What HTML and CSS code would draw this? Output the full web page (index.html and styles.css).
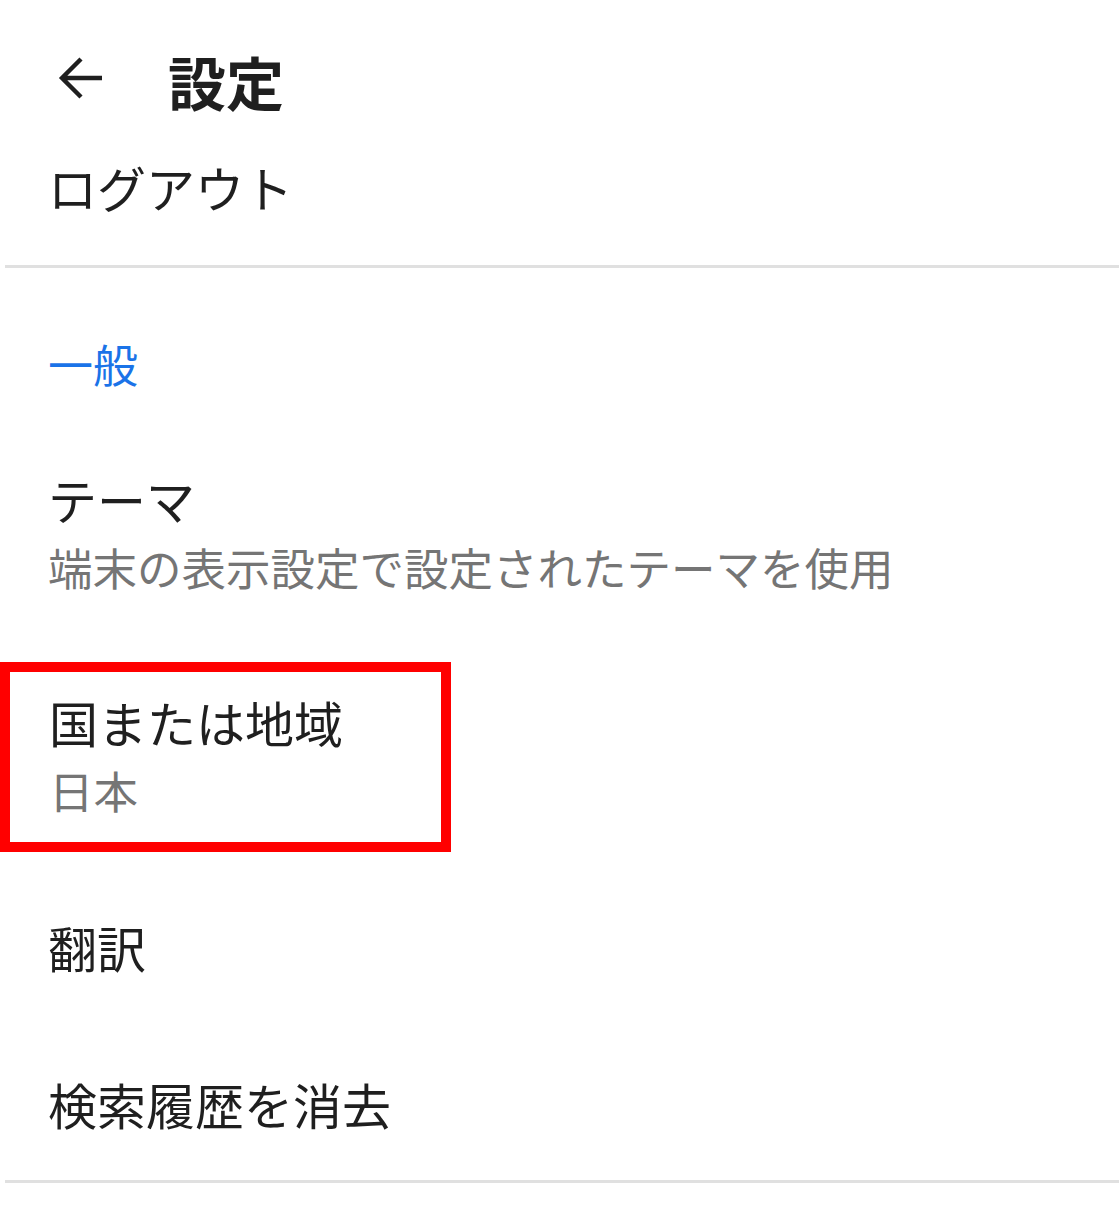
FILE: index.html
```html
<!DOCTYPE html>
<html lang="ja">

<head>
  <meta charset="UTF-8">
  <title>設定</title>
  <link rel="stylesheet" href="styles.css">
</head>

<body>
  <header class="top-bar">
    <button class="back-btn" type="button" aria-label="戻る">
      <svg width="46" height="46" viewBox="0 0 46 46">
        <path d="M44 23H5M23 4L4 23L23 42" fill="none" stroke="#1f1f1f" stroke-width="4.4" />
      </svg>
    </button>
    <h1>設定</h1>
  </header>

  <div class="logout">ログアウト</div>
  <div class="divider"></div>

  <h2 class="category">一般</h2>

  <div class="pref">
    <div class="pref-title">テーマ</div>
    <div class="pref-summary">端末の表示設定で設定されたテーマを使用</div>
  </div>

  <div class="pref highlighted">
    <div class="pref-title">国または地域</div>
    <div class="pref-summary">日本</div>
  </div>

  <div class="pref single">
    <div class="pref-title">翻訳</div>
  </div>

  <div class="pref single">
    <div class="pref-title">検索履歴を消去</div>
  </div>

  <div class="divider bottom"></div>
</body>

</html>
```

FILE: styles.css
```css
body {
  margin: 0;
  background-color: #ffffff;
  color: #1f1f1f;
  font-family: "Noto Sans CJK JP", "Noto Sans", sans-serif;
}

.top-bar {
  display: flex;
  align-items: center;
  height: 164px;
  padding-left: 58px;
  box-sizing: border-box;
}

.back-btn {
  background: none;
  border: none;
  padding: 0;
  margin: -8px 0 0 0;
  width: 46px;
  height: 46px;
  display: flex;
  cursor: pointer;
}

.top-bar h1 {
  margin: -3px 0 0 64px;
  font-size: 58px;
  line-height: 58px;
  font-weight: bold;
}

.logout {
  padding: 0 48px 53px;
  margin-top: -2px;
  font-size: 49px;
  line-height: 50px;
}

.divider {
  height: 3px;
  margin-left: 5px;
  background-color: #e0e0e0;
}

.divider.bottom {
  margin-top: 13px;
}

.category {
  margin: 0;
  padding: 73px 48px 62px;
  font-size: 45px;
  line-height: 46px;
  font-weight: normal;
  color: #1a73e8;
}

.pref {
  padding: 25px 48px 31px;
}

.pref + .pref {
  margin-top: 43px;
}

.pref-title {
  font-size: 49px;
  line-height: 50px;
}

.pref-summary {
  margin-top: 22px;
  font-size: 44.5px;
  line-height: 42px;
  color: #757575;
}

.pref.highlighted {
  width: 451px;
  box-sizing: border-box;
  border: 10px solid #ff0000;
  padding-left: 39px;
}

.pref.single {
  padding-top: 26px;
  padding-bottom: 38px;
}

.pref.highlighted + .pref {
  margin-top: 44px;
}
```
